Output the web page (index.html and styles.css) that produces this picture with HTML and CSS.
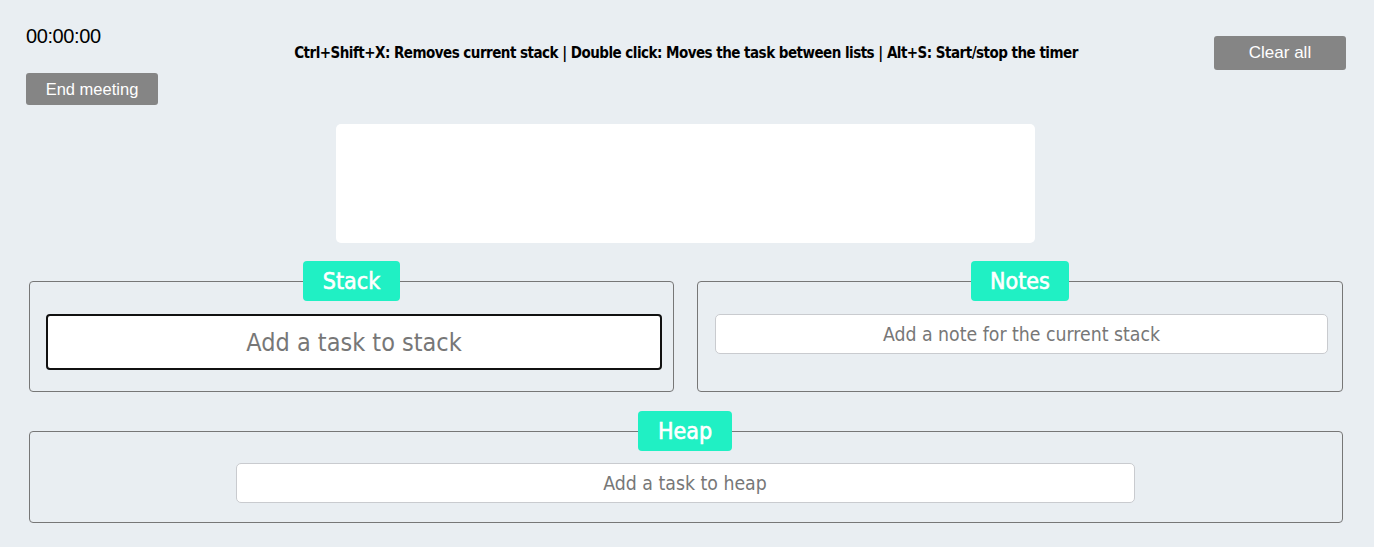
FILE: index.html
```html
<!DOCTYPE html>
<html lang="en">
<head>
<meta charset="utf-8">
<title>Stack meeting</title>
<link rel="stylesheet" href="styles.css">
</head>
<body>
<header class="top">
  <div class="top-left">
    <div class="timer">00:00:00</div>
    <button class="btn btn-end">End meeting</button>
  </div>
  <div class="hints">Ctrl+Shift+X: Removes current stack | Double click: Moves the task between lists | Alt+S: Start/stop the timer</div>
  <div class="top-right">
    <button class="btn btn-clear">Clear all</button>
  </div>
</header>
<div class="current"></div>
<div class="row">
  <fieldset class="panel panel-stack">
    <legend class="tag">Stack</legend>
    <input class="field field-stack" type="text" placeholder="Add a task to stack" autofocus>
  </fieldset>
  <fieldset class="panel panel-notes">
    <legend class="tag">Notes</legend>
    <input class="field field-notes" type="text" placeholder="Add a note for the current stack">
  </fieldset>
</div>
<fieldset class="panel panel-heap">
  <legend class="tag">Heap</legend>
  <input class="field field-heap" type="text" placeholder="Add a task to heap">
</fieldset>
</body>
</html>
```
FILE: styles.css
```css
html, body {
  margin: 0;
  padding: 0;
}
body {
  background: #e9eef2;
  font-family: "DejaVu Sans Condensed", "DejaVu Sans", sans-serif;
  color: #000;
  width: 1374px;
  height: 547px;
  overflow: hidden;
}
.top {
  display: grid;
  grid-template-columns: 200px 1fr 200px;
  padding: 0 28px 0 26px;
  height: 124px;
  box-sizing: border-box;
}
.top-left {
  display: flex;
  flex-direction: column;
  align-items: flex-start;
  padding-top: 25px;
}
.timer {
  font-family: "Liberation Sans", Arial, sans-serif;
  font-size: 20px;
  letter-spacing: -0.4px;
  line-height: 23px;
  height: 25px;
}
.btn {
  border: none;
  border-radius: 3px;
  background: #858585;
  color: #fff;
  font-family: "Liberation Sans", Arial, sans-serif;
  padding: 0;
  cursor: pointer;
}
.btn-end {
  margin-top: 23px;
  width: 132px;
  height: 32px;
  font-size: 16.5px;
}
.hints {
  text-align: center;
  font-weight: bold;
  font-size: 15px;
  letter-spacing: -0.52px;
  padding-top: 44px;
  white-space: nowrap;
}
.top-right {
  display: flex;
  justify-content: flex-end;
  align-items: flex-start;
  padding-top: 36px;
}
.btn-clear {
  width: 132px;
  height: 34px;
  font-size: 17px;
}
.current {
  width: 699px;
  height: 119px;
  margin: 0 0 0 336px;
  background: #fff;
  border-radius: 5px;
}
.row {
  display: flex;
  gap: 23px;
  margin: 18px 0 0 29px;
}
.panel {
  box-sizing: border-box;
  margin: 0;
  border: 1px solid #777;
  border-radius: 4px;
  min-width: 0;
}
.panel-stack {
  flex: none;
  width: 645px;
  padding: 13px 16px 21px;
}
.panel-notes {
  flex: none;
  width: 646px;
  padding: 13px 15px 21px;
}
.panel-heap {
  width: 1314px;
  margin: 19px 0 0 29px;
  padding: 12px 17px 19px 15px;
  display: flex;
  justify-content: center;
}
.tag {
  margin: 0 auto;
  padding: 0 19.5px;
  height: 40px;
  line-height: 40px;
  background: #20f0c4;
  color: #fff;
  border-radius: 4px;
  font-size: 23px;
  font-weight: normal;
  -webkit-text-stroke: 0.6px #fff;
}
.field {
  display: block;
  box-sizing: border-box;
  width: 100%;
  background: #fff;
  text-align: center;
  font-family: "DejaVu Sans Condensed", "DejaVu Sans", sans-serif;
  color: #333;
  outline: none;
}
.field::placeholder {
  color: #777;
  opacity: 1;
}
.field-stack {
  width: calc(100% + 5px);
  height: 56px;
  border: 2px solid #111;
  border-radius: 4px;
  font-size: 25px;
}
.field-notes {
  margin-left: 2px;
  width: calc(100% - 1px);
  height: 40px;
  border: 1px solid #c9cbcf;
  border-radius: 5px;
  font-size: 19.3px;
}
.field-heap {
  width: 899px;
  height: 40px;
  border: 1px solid #c9cbcf;
  border-radius: 5px;
  font-size: 19.3px;
}
```
